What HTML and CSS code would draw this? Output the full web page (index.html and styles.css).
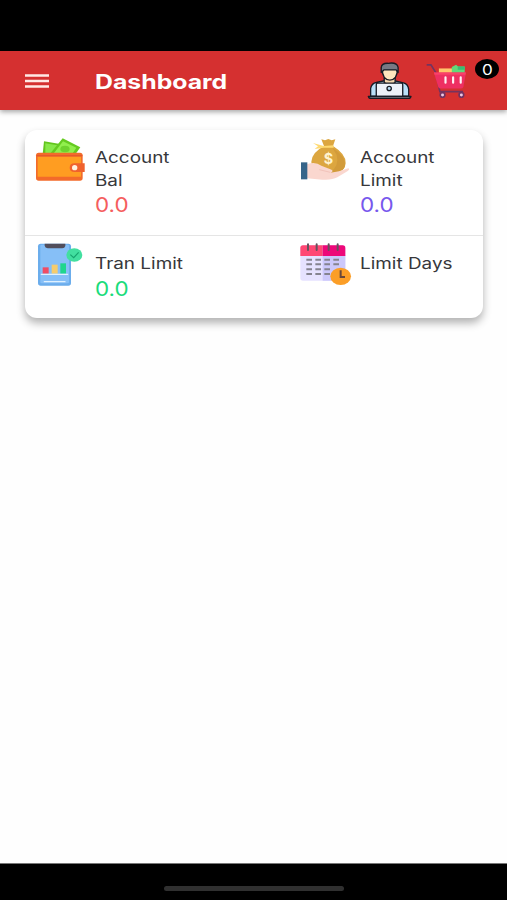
FILE: index.html
```html
<!DOCTYPE html>
<html lang="en">
<head>
<meta charset="utf-8">
<title>Dashboard</title>
<link rel="stylesheet" href="styles.css">
</head>
<body>
<div class="status"></div>
<header class="bar">
  <svg class="menu" viewBox="0 0 24 16"><path d="M0 2.5H24M0 8H24M0 13.5H24" stroke="#ffe9e5" stroke-width="2.4"/></svg>
  <h1 class="title"><span class="wide">Dashboard</span></h1>
  <svg class="user" viewBox="52 48 136 116">
    <g stroke="#171b25" stroke-width="4" stroke-linejoin="round">
      <path d="M63 153V130Q66 114 80 112L108 106H132L162 113Q176 116 178 133V153Z" fill="#b9dff7"/>
      <path d="M104 99H137V112L121 123L104 112Z" fill="#f4d6ad"/>
      <path d="M98 70Q98 104 121 105Q144 104 144 70Z" fill="#ffe6bd"/>
      <path d="M95 82V67Q96 53 116 54Q143 50 146 66V82L140 74H103Z" fill="#777984"/>
      <path d="M84 114H156Q160 114 160 119V154H80V119Q80 114 84 114Z" fill="#edf1f8"/>
      <path d="M56 154H185Q184 160 177 160H64Q57 160 56 154Z" fill="#777b86"/>
      <circle cx="119" cy="130" r="6.5" fill="#b9dff7"/>
    </g>
  </svg>
  <svg class="cart" viewBox="228 53 124 108">
    <path d="M230 58H243L258 82L270 139H340" fill="none" stroke="#74335f" stroke-width="5"/>
    <path d="M267 69H307V85H267Z" fill="#ffc66b"/>
    <path d="M306 65L319 58L325 63H345V85H306Z" fill="#62d879"/>
    <path d="M324 63H345V73H324Z" fill="#38bd75"/>
    <path d="M252 81H349L341 125Q339 130 333 130H273Q267 130 265 125Z" fill="#ee2f62"/>
    <path d="M252 81H349L347 88H254Z" fill="#fa4169"/>
    <path d="M287 96V112M310 96V112M333 96V112" stroke="#fff2f4" stroke-width="6.5" stroke-linecap="round"/>
    <g fill="#eec8e1" stroke="#713261" stroke-width="5"><circle cx="278" cy="149" r="7"/><circle cx="335" cy="149" r="7"/></g>
  </svg>
  <span class="badge"><span class="wide">0</span></span>
</header>
<main class="page">
  <section class="card">
    <div class="row first">
      <div class="cell">
        <svg class="icon" viewBox="48 54 150 129">
          <path d="M72 64L116 71L140 103H68Z" fill="#63c51d"/>
          <path d="M76 70L112 76L123 103H76Z" fill="#87e84a"/>
          <path d="M92 99L128 55L181 82L164 106H92Z" fill="#65cb20"/>
          <path d="M102 99L129 64L169 83L155 104H102Z" fill="#91ef4d"/>
          <ellipse cx="135" cy="87" rx="14" ry="10" fill="#6fd32e"/>
          <rect x="48" y="98" width="140" height="84" rx="8" fill="#f36b2a"/>
          <path d="M53 110H183V170H53Z" fill="#ff9d21"/>
          <path d="M50 107H187" stroke="#e6582b" stroke-width="4"/>
          <path d="M194 130H164Q149 130 149 143T164 156H194Z" fill="#f0622d"/>
          <circle cx="164" cy="143" r="8" fill="#fff2df"/>
        </svg>
        <div class="info"><p class="label"><span class="wide">Account</span><br><span class="wide">Bal</span></p><p class="value red"><span class="wide">0.0</span></p></div>
      </div>
      <div class="cell">
        <svg class="icon" viewBox="48 54 150 129">
          <path d="M109 58L120 61L130 57L140 61L151 58L144 78Q184 103 182 130Q180 153 155 158H103Q78 148 79 125Q80 98 117 78Z" fill="#dca640"/>
          <path d="M142 83Q183 109 180 136Q178 154 153 158H135Q164 137 155 105Z" fill="#d29b3a"/>
          <path d="M84 69L116 78L146 76V83H116L89 87L99 79Z" fill="#ffda72"/>
          <path d="M66 133Q91 124 109 137L136 148Q149 153 137 158L162 154L190 145Q196 148 187 154L157 172Q141 181 112 179L66 175Z" fill="#fad7cf"/>
          <path d="M103 149L136 157" fill="none" stroke="#f2c3ba" stroke-width="3"/>
          <path d="M48 127H67V178H48Z" fill="#37658a"/>
          <text class="coin" x="130" y="133" text-anchor="middle">$</text>
        </svg>
        <div class="info"><p class="label"><span class="wide">Account</span><br><span class="wide">Limit</span></p><p class="value violet"><span class="wide">0.0</span></p></div>
      </div>
    </div>
    <div class="row">
      <div class="cell">
        <svg class="icon" viewBox="63 40 150 129">
          <rect x="69" y="42" width="99" height="126" rx="8" fill="#6badec"/>
          <rect x="76" y="45" width="86" height="116" rx="4" fill="#86bff7"/>
          <path d="M89 42H151V49Q149 56 142 56H98Q90 55 89 48Z" fill="#514e5c"/>
          <rect x="83" y="113" width="18" height="19" fill="#f04c65"/>
          <rect x="110" y="105" width="18" height="27" fill="#f6cc6d"/>
          <rect x="136" y="101" width="17" height="31" fill="#20d68d"/>
          <path d="M79 134H158M88 156H150" stroke="#e0f1ff" stroke-width="4" stroke-linecap="round"/>
          <ellipse cx="178" cy="76" rx="24" ry="20" fill="#42dfa0"/>
          <path d="M166 75L176 84L191 68" fill="none" stroke="#16a46f" stroke-width="3.5"/>
        </svg>
        <div class="info"><p class="label"><span class="wide">Tran Limit</span></p><p class="value green"><span class="wide">0.0</span></p></div>
      </div>
      <div class="cell">
        <svg class="icon" viewBox="47 41 150 129">
          <rect x="45" y="48" width="135" height="106" rx="8" fill="#e6e2ff"/>
          <path d="M112 78H180V146Q180 154 172 154H112Z" fill="#ccc8fb"/>
          <path d="M45 80V56Q45 48 53 48H112V80Z" fill="#ff4773"/>
          <path d="M112 48H172Q180 48 180 56V80H112Z" fill="#ed0879"/>
          <path d="M68 45V62M94 45V62M130 45V62M157 45V62" stroke="#64535e" stroke-width="6" stroke-linecap="round"/>
          <path d="M63 91H80M90 91H107M117 91H134M144 91H161M63 105H80M90 105H107M117 105H134M144 105H161M63 120H80M90 120H107M117 120H134M63 134H80M90 134H107M117 134H134" stroke="#85838f" stroke-width="6"/>
          <ellipse cx="166" cy="141" rx="31" ry="26" fill="#fb9e27"/>
          <path d="M166 123V143H179" fill="none" stroke="#69483a" stroke-width="6"/>
        </svg>
        <div class="info"><p class="label"><span class="wide">Limit Days</span></p></div>
      </div>
    </div>
  </section>
</main>
<footer class="home"><div class="handle"></div></footer>
</body>
</html>
```

FILE: styles.css
```css
* { box-sizing: border-box; }
body {
  margin: 0;
  height: 900px;
  display: flex;
  flex-direction: column;
  overflow: hidden;
  background: #fefefe;
  font-family: Inter, "Liberation Sans", sans-serif;
}
h1, p { margin: 0; }
.wide {
  display: inline-block;
  transform: scaleX(1.22);
  transform-origin: left center;
  white-space: nowrap;
}
.status { height: 51px; background: #000; flex: none; }
.bar {
  position: relative;
  flex: none;
  display: flex;
  align-items: center;
  height: 59px;
  padding-left: 25px;
  background: #d53030;
  box-shadow: 0 2px 5px rgba(0, 0, 0, .35);
}
.menu { width: 24px; height: 16px; }
.title {
  width: 272px;
  margin-left: 46px;
  padding-top: 2px;
  color: #fff;
  font-size: 20px;
  line-height: 28px;
  font-weight: 700;
}
.title .wide { transform: scaleX(1.24); }
.user { width: 45px; height: 39px; flex: none; }
.cart { width: 41px; height: 36px; margin-left: 14px; flex: none; overflow: visible; }
.badge {
  position: absolute;
  top: 8px;
  left: 475px;
  width: 24px;
  height: 20px;
  border-radius: 50%;
  background: #000;
  color: #fff;
  font-size: 14px;
  line-height: 21px;
  text-align: center;
}
.badge .wide { transform-origin: center; }
.page { flex: 1; padding: 20px 24px 0 25px; }
.card {
  height: 188px;
  border-radius: 12px;
  background: #fff;
  box-shadow: 0 5px 9px rgba(0, 0, 0, .3);
}
.row { display: grid; grid-template-columns: 265px 1fr; height: 82px; }
.first { height: 106px; border-bottom: 1.5px solid #e5e5e5; }
.cell { display: flex; padding: 8px 0 0 11px; }
.icon { width: 50px; height: 43px; flex: none; overflow: visible; }
.row:last-child .icon { margin-top: -1px; }
.info { padding: 9px 0 0 9px; }
.label { color: #37373b; font-size: 15.5px; line-height: 22.5px; }
.value { font-size: 20px; line-height: 27px; }
.value .wide { transform: scaleX(1.12); }
.red { color: #f55e5e; }
.violet { color: #7758ed; }
.green { color: #1bdc7b; }
.coin { font: 700 43px Inter, sans-serif; fill: #fff3cf; }
.home {
  flex: none;
  height: 37px;
  padding-top: 22px;
  border-top: 1px solid #777;
  background: #000;
}
.handle { width: 180px; height: 5px; margin: 0 auto; border-radius: 3px; background: #303030; }
```
